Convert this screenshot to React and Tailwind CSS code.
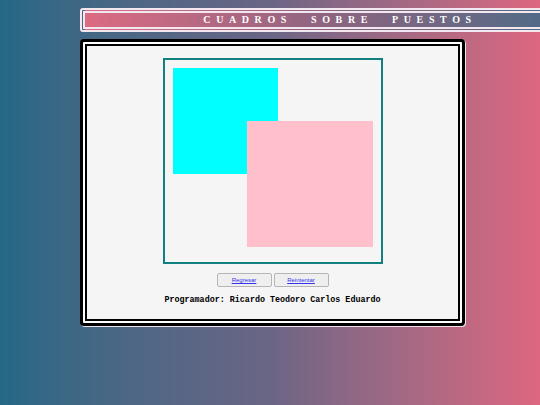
import React from 'react';

const App = () => {
  return (
    <div className="w-[540px] h-[405px] overflow-hidden bg-gradient-to-r from-[#246885] via-[#6a6585] to-[#dd6680] pt-[8px]">
      {/* titulo */}
      <div className="ml-[80px] w-[520px] h-[24px] border-[5px] border-double border-[#f3e8f0] rounded-[3px] bg-gradient-to-r from-[#dc6a82] via-[#8a6480] to-[#3c6b88] flex items-center justify-center">
        <h1 className="text-white font-bold text-[10px] leading-none tracking-[0.56em] [word-spacing:11px]" style={{ fontFamily: '"Liberation Serif", "Times New Roman", serif' }}>
          CUADROS SOBRE PUESTOS
        </h1>
      </div>

      {/* caja principal */}
      <div className="ml-[80px] mt-[7px] w-[385px] h-[287px] border-[3px] border-black rounded-[4px] bg-white p-[2px] shadow-[1px_1px_0_#f0e0ea]">
        <div className="w-full h-full border-[2px] border-black bg-[#f5f5f5] flex flex-col items-center pt-[12px]">
          <div className="relative w-[220px] h-[206px] border-[2px] border-[#138080]">
            <div className="absolute left-[8px] top-[8px] w-[105px] h-[106px] bg-[#00ffff]"></div>
            <div className="absolute left-[82px] top-[61px] w-[126px] h-[126px] bg-[#ffc0cb]"></div>
          </div>

          <div className="mt-[9px] flex gap-[2px]">
            <button className="w-[55px] h-[14px] bg-[#efefef] border border-[#b5b5b5] rounded-[2px] flex items-center justify-center">
              <a href="#" className="text-[6px] text-[#3333ee] underline leading-none" style={{ fontFamily: '"Liberation Sans", Arial, sans-serif' }}>Regresar</a>
            </button>
            <button className="w-[55px] h-[14px] bg-[#efefef] border border-[#b5b5b5] rounded-[2px] flex items-center justify-center">
              <a href="#" className="text-[6px] text-[#3333ee] underline leading-none" style={{ fontFamily: '"Liberation Sans", Arial, sans-serif' }}>Reintentar</a>
            </button>
          </div>

          <p className="mt-[8px] text-[8.4px] font-bold text-black leading-[10px]" style={{ fontFamily: '"Liberation Mono", "Courier New", monospace' }}>
            Programador: Ricardo Teodoro Carlos Eduardo
          </p>
        </div>
      </div>
    </div>
  );
};

export default App;
